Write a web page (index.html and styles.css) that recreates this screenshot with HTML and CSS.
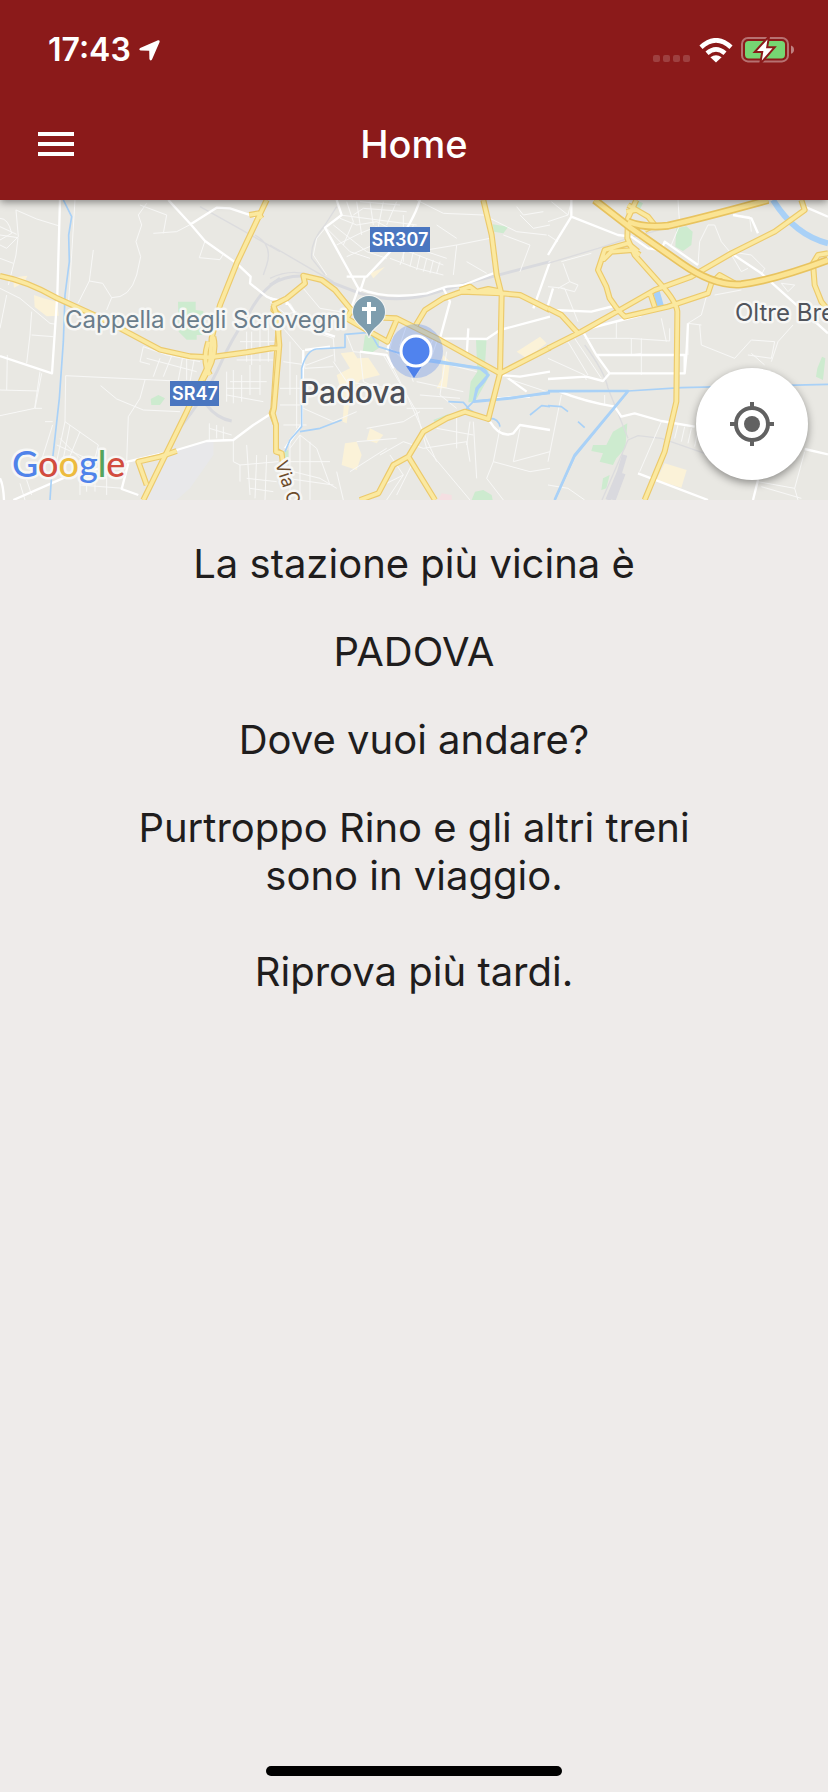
FILE: index.html
```html
<!DOCTYPE html>
<html lang="it">
<head>
<meta charset="utf-8">
<meta name="viewport" content="width=device-width">
<title>Home</title>
<link rel="stylesheet" href="styles.css">
</head>
<body>
<div class="screen">
  <header class="header">
    <div class="status">
      <div class="status-group">
        <span class="clock">17:43</span>
        <svg class="arrow" width="21" height="21" viewBox="0 0 21 21"><path d="M19 0.3Q21 0 20.6 2L13 19.6Q11.2 21.6 10.4 19L10.2 10.8L1.6 10.5Q-0.8 9.6 1.2 8Z" fill="#fff"/></svg>
      </div>
      <div class="status-group status-icons">
        <svg width="38" height="25" viewBox="0 0 38 25" fill="#fff" fill-opacity="0.17"><rect x="0" y="17" width="7" height="7" rx="2"/><rect x="10" y="17" width="7" height="7" rx="2"/><rect x="20" y="17" width="7" height="7" rx="2"/><rect x="30" y="17" width="7" height="7" rx="2"/></svg>
        <svg width="34" height="25" viewBox="0 0 34 25"><g fill="none" stroke="#fff" stroke-width="4.6"><path d="M2 9.2Q17-4.6 32 9.2"/><path d="M8 15.2Q17 7.4 26 15.2"/></g><path d="M11.4 19.2Q17 15.2 22.6 19.2L17 24.6Z" fill="#fff"/></svg>
        <svg width="54" height="26" viewBox="0 0 54 26"><rect x="1" y="1" width="46" height="23.4" rx="6" fill="none" stroke="#fff" stroke-opacity="0.38" stroke-width="2"/><path d="M50 8.6Q53 9.6 53 12.7Q53 15.8 50 16.8Z" fill="#fff" fill-opacity="0.45"/><rect x="4" y="4" width="40" height="17.4" rx="3.6" fill="#76d672"/><path d="M26.5 2.5L16 14H22.4L20.8 23.5L31.5 11.2H25Z" fill="#fff" stroke="#8b1a1a" stroke-width="4" paint-order="stroke"/></svg>
      </div>
    </div>
    <div class="toolbar">
      <button class="menu" type="button" aria-label="Menu"><svg width="36" height="24" viewBox="0 0 36 24" fill="#fff"><path d="M0 0H36V4H0ZM0 10H36V14H0ZM0 20H36V24H0Z"/></svg></button>
      <h1 class="title">Home</h1>
    </div>
  </header>

  <section class="map" aria-label="Mappa">
    <svg class="map-canvas" viewBox="0 0 828 300" preserveAspectRatio="xMidYMid slice">
      <rect width="828" height="300" fill="#e9e8e3"/>

      <!-- west -->
      <g transform="translate(0 -5) scale(0.33333)">
        <path class="urban" d="M540 765L640 735L640 780L570 880L530 915H440L500 790Z"/>
        <path class="sand" d="M102 300L130 310L172 320L176 362L140 364L104 336ZM55 245L82 242L74 262L42 278L40 258Z"/>
        <path class="park" d="M534 320H587V345L610 348V420H590V434H560L536 410ZM452 612L475 600L495 610L480 630L454 630Z"/>
        <path class="rail" d="M600 35Q700 90 840 170M765 120Q820 150 800 210L790 240"/>
        <path class="rail-wide" d="M840 250Q780 290 750 350Q690 440 660 510Q620 600 530 710M620 630Q650 670 695 678"/>
        <g class="lane">
          <path d="M48 45L110 72L175 92M48 45L55 125L20 160L0 150M0 70Q25 70 35 115L0 135M0 120L54 128L48 180L25 270M0 95L50 118M225 15L210 260L205 330M440 25L415 60L425 90L408 140L422 185L410 240Q390 310 335 308L308 265L268 258L280 165M268 258L234 325M460 115L530 110L572 88M420 30L500 60L490 115M335 308L320 345M615 138L598 188L660 194L668 180M0 190L40 205M0 280L60 310L150 385L168 388M95 350L90 420L80 505M95 420L160 425M20 300L0 400M22 480L20 585M0 585L115 588M120 530L104 640L0 662M125 535L105 640L126 640M197 542L195 680M197 542L570 560M435 555L420 610L385 665L380 800M302 572L350 612L430 645L540 650M135 680H158M195 680L295 750L285 790M195 680L170 800M210 690L190 790M240 710L205 795M170 750L260 790M180 730L240 790M120 810L158 690M430 455L500 480L600 500M430 455L420 500L450 508M520 470L490 545M550 475L535 555M480 490L460 545M560 480V555M585 480L570 560M440 490L590 530M740 410V500M755 410V510M780 400V500M805 390V500M720 440H830M700 470H830M710 495H820M680 530V620M700 525V625M725 540V620M680 580H780M680 600L790 620M690 560H800M750 510V600M780 510V600M628 685V735M650 690V730M670 695V735M628 700L695 720M700 735V800L720 810V860M740 750L750 900M770 780L765 910M800 780L795 915M720 810L835 800M740 850L830 860M750 880L820 890M60 865L75 915M80 855L95 900M240 850V900M260 840V890M285 840V890M320 840V900M240 870L370 880"/>
        </g>
        <g class="street">
          <path d="M180 15L172 300L156 535L0 483"/>
          <path d="M505 15L572 88L615 138L710 205L752 245L750 265L800 305L835 320M572 88L650 38L690 40L780 70M40 915L200 845L370 803L520 768L620 738L700 735L760 690L815 655M385 805L365 882L415 900M0 850Q10 870 12 915"/>
        </g>
        <path class="water" d="M190 15L215 65L206 120L208 200L195 300L190 440L178 610L168 700L158 790L150 915"/>
        <g class="road-edge"><path id="w1" d="M0 243Q80 258 168 308L300 368L480 464L570 484L630 487L740 472L840 456"/><path id="w2" d="M800 15L710 205L660 330L635 430L630 500L560 650L430 915"/><path id="w3" d="M748 60L775 55L785 70M842 320L824 325L820 345L838 360L820 640L815 655L828 690V765L842 775M640 425Q655 480 608 555M625 440Q605 500 630 540M530 768L480 785L415 800L440 870"/></g>
        <g class="road"><use href="#w1"/><use href="#w2"/><use href="#w3"/></g>
      </g>

      <!-- centre -->
      <g transform="translate(270 -5) scale(0.33333)">
        <path class="park" d="M668 88L715 95L700 115L672 110ZM285 420L328 430L326 460L300 476L278 470ZM618 434L650 430L645 510L660 540L615 620L595 622L602 560L622 530ZM490 675L540 655L500 690ZM605 915L615 890L640 885L665 900L668 915ZM38 770L55 765V810H38Z"/>
        <path class="sand" d="M212 475L250 470L262 490L295 488L330 540L270 555L240 610L230 685L218 680L222 620L200 540L240 520ZM520 480L540 500L530 580H500L515 550ZM740 470L810 425L830 445L770 490ZM300 700L340 720L320 745L290 735ZM225 745L260 740L275 780L260 825L215 810ZM300 235L345 215L310 250Z"/>
        <path d="M505 915L515 895L545 900V915Z" fill="#f5dfe2"/>
        <path class="rail" d="M200 35L165 90Q120 140 125 190L165 240M0 150L120 220L190 260M0 250Q60 220 120 240"/>
        <path class="rail-wide" d="M0 270Q70 225 165 255L270 295Q370 325 470 300L600 262L840 200"/>
        <g class="lane">
          <path d="M165 100L140 130L130 180L170 240M210 70L260 90L320 80L360 100M230 20L250 80L220 150M260 20L275 120M300 20L310 90M340 20L325 95M380 20L350 90M170 100L240 170L300 190M190 90L290 170L350 190M200 150L270 115L320 95M230 185L310 150M210 60L440 90M250 60L280 40L410 50M270 20L390 30M400 60V200M430 90L390 210M360 190L440 220L520 240M390 160L520 210M410 150L530 190M430 170L420 215M450 180L440 225M470 190L460 230M490 195L480 235M510 200L500 235M400 130L470 165L560 150L660 130M560 150L550 240M500 90L560 130M590 200L650 235M440 15L520 55L640 60M740 35L760 60L820 50M750 60L790 100L840 90M640 60L740 110L830 120M700 120L780 150L750 230M0 320L100 400L190 430L195 500M60 325L100 390L180 410M100 280L150 340L210 350M0 370L80 350M40 400L100 470L105 520L190 515M40 500L110 510L190 480M30 580H100M30 630H90M60 440V600M80 540V700M40 690H110M100 640L190 680L260 650M190 500L230 560L360 580M270 470L280 560L350 590M230 420L250 470L350 480M350 480L410 600L500 800M340 480L440 650L470 760L600 915M380 380L360 460L450 530M410 390L390 450L430 560M440 400L500 440L480 500M490 430L440 540M530 470L510 600L560 640M500 500L620 530M440 560L580 590M450 600L570 610M410 640L520 640M290 700L400 680L450 650M260 740L380 730M330 780L400 740L460 760M240 830L350 760M360 780L400 840L340 870M200 830L220 915M70 830L150 850L200 880M60 760L90 720L140 760L180 870M60 730V915M90 720V915M120 740V915M50 850L190 870M50 800L180 800M560 660V760M600 680L590 750M500 700L610 720M460 760L590 740L600 800M610 680L620 850M690 700L670 800L650 850L700 915M750 700L730 800L840 770M670 800L780 830L840 820M710 550L830 590M400 840L350 915M430 800L380 900"/>
        </g>
        <g class="street">
          <path d="M200 15L215 60L165 98L235 225L265 280L240 350M265 280Q350 315 470 295L530 275L580 270L670 235M450 15Q430 80 370 160L290 245H230M285 245L270 290M520 280L540 320L510 430L650 432L690 405L840 365M840 200L790 340M595 400L590 480M0 310L50 320L105 395L195 425M50 320V330M100 465L95 690L45 760M105 465L180 455M660 680Q690 730 730 715L750 690L840 705M690 540L750 545L840 530M715 550L770 590M270 470L350 480L370 520M380 380L350 470M680 610L780 605"/>
        </g>
        <path class="water" d="M45 770L60 735L95 695V520Q110 465 140 462L225 457V418L300 412L325 455L380 472L475 492L640 520Q670 540 625 580L610 620L590 640L610 650M610 618L700 610L840 595M535 620L580 622L600 645M90 710L150 700L215 675M780 660L815 632L840 635M660 670Q685 670 690 695"/>
        <path class="water canal" d="M475 498L630 520L655 540L620 580L612 620L720 610L840 592"/>
        <g class="road-edge"><path id="c1" d="M640 15L665 120L680 240L695 300L690 535L655 672L585 650L530 670L460 710L415 785L370 810L325 895L270 915M415 785L495 915"/><path id="c2" d="M10 330L50 310L105 265L100 242L155 255L195 285L240 340L265 365L380 370L510 435L690 535L840 458M380 375L352 440L290 405L230 370L245 345M438 390L465 345L520 310L575 290L695 295L750 300L840 345M570 285L600 275L620 290L655 282L695 290"/><path id="c3" d="M10 330L20 360L28 450L12 640L8 655L18 690V770L35 775L38 800M0 460H28"/></g>
        <g class="road"><use href="#c1"/><use href="#c2"/><use href="#c3"/></g>
      </g>

      <!-- east -->
      <g transform="translate(548 -5) scale(0.33333)">
        <path class="park" d="M385 100L415 94L434 110L430 150L405 168L382 155ZM265 15L285 25L275 45L262 40ZM822 485L832 490L825 555L804 545L808 520ZM238 685L232 760L205 790L195 810L155 800L165 775L130 768L135 750L175 750L195 710ZM165 850L185 840L175 880L160 885Z"/>
        <path class="sand" d="M350 805L416 825L400 878L325 855Z"/>
        <path class="rail" d="M0 205L150 160L240 130L500 60L640 30M110 450Q170 530 180 580L240 730M162 915L240 735L270 722L340 730L470 775"/>
        <path d="M180 915L215 830L230 780M195 915L225 835" fill="none" stroke="#d9d9de" stroke-width="16"/>
        <g class="lane">
          <path d="M0 80L60 60L70 20M60 60L10 20M0 120L30 140M40 200L130 175M45 205L65 260L90 270L80 290L40 280M65 260L30 280M390 15L395 90L370 150M450 210L455 140L480 90L500 90L520 140L545 170L580 230L600 220M545 170L610 180L650 220L640 240M555 60L605 65L610 110M0 275L50 280L90 380M420 385V480M455 390L460 450M475 305L460 360L420 385L460 390M460 450L560 490L610 435L680 440L670 490L600 480M610 475L650 510M735 390L690 440L670 500M700 265L740 270L720 290ZM205 380V430M110 430H245L365 438M250 430V480L280 475V430M280 475V540M365 438V400M60 440L120 540M80 430L160 550M40 600L0 800M170 600V630L60 600M390 690L380 730M410 695L400 740M430 700L420 745M450 705L440 755M340 680L275 830M0 870L60 880L110 915M770 770L740 880L630 860M740 880L750 915M640 875L760 910M500 300L580 285M340 370L355 440M0 460L60 440M0 490L110 540L115 555"/>
        </g>
        <g class="street">
          <path d="M70 15V65L30 130L0 180M70 65L210 120L250 125L300 160L340 165L350 140L450 210M550 175L640 235L840 415M770 35L840 65M555 60L610 70L630 115M210 330L130 350L15 345M105 405L280 360M105 410L145 480H410V535H185L145 480M420 385L415 480L410 535M0 552L115 545L165 558L185 535M35 590Q110 620 200 635L220 665L260 655L340 678L440 695M270 835L480 915M770 762L840 778M630 855L615 915M15 280L0 330"/>
        </g>
        <path class="water" d="M0 590L240 588L400 578L840 568M20 915L80 785L240 590M0 632L40 635L60 650M90 680L110 698"/>
        <path class="water canal" d="M0 588L240 588L80 780L20 915"/>
        <path class="river" d="M675 15Q740 120 840 145"/>
        <path d="M315 290L335 288L347 330L327 336Z" fill="#a5d0fa"/>
        <g class="road-edge"><path id="e1" d="M265 15L240 70L238 130L260 180L340 270Q385 320 388 350L385 620L350 770L290 915"/><path id="e2" d="M0 460L100 410L215 345L320 285L430 245L550 175L680 110L770 45L760 15M0 340L40 360L90 415M210 345L230 365L360 335L480 295L490 265L515 240L560 265M210 345L185 310L175 275L150 225L170 165L240 145L270 170M165 195L190 170L255 165L275 180M305 290L320 335M840 175L810 180L795 205L800 270L820 320L840 345M240 30L300 65L320 90L290 105M235 50L265 45"/></g>
        <g class="road-edge"><path id="e3" d="M140 15L250 100L400 205Q500 275 580 268Q680 255 840 195M240 80Q290 100 360 92Q460 70 660 15"/></g>
        <g class="road"><use href="#e1"/><use href="#e2"/></g>
        <g class="highway-edge"><use href="#e3"/></g>
        <g class="highway"><use href="#e3"/></g>
      </g>

      <!-- labels and markers -->
      <rect x="370" y="27" width="60" height="25" fill="#4a76c0"/>
      <text class="shield" x="400" y="46">SR307</text>
      <rect x="170" y="181" width="49" height="25" fill="#4a76c0"/>
      <text class="shield" x="195" y="200">SR47</text>
      <text class="label poi" x="65" y="128">Cappella degli Scrovegni</text>
      <text class="label city" x="300" y="203">Padova</text>
      <text class="label district" x="735" y="121">Oltre Bre</text>
      <text class="label via" transform="translate(275 263) rotate(72)">Via C</text>
      <path d="M369 137C367 127 353 124 353 112A16 16 0 0 1 385 112C385 124 371 127 369 137Z" fill="#7e9dae" stroke="#f4f4f2" stroke-width="2" paint-order="stroke"/>
      <path d="M369 102V124M362 109H376" stroke="#fff" stroke-width="4"/>
      <circle cx="416" cy="151" r="27" fill="#4f80ee" fill-opacity="0.3"/>
      <path d="M406 166H422L414 178Z" fill="#4d80ea"/>
      <circle cx="416" cy="151" r="15" fill="#5083ee" stroke="#fff" stroke-width="3"/>
      <text class="label google" x="12" y="277"><tspan fill="#4f83ea">G</tspan><tspan fill="#d24c3e">o</tspan><tspan fill="#edbb3d">o</tspan><tspan fill="#4f83ea">g</tspan><tspan fill="#55a45c">l</tspan><tspan fill="#d24c3e">e</tspan></text>
    </svg>
    <button class="locate" type="button" aria-label="La mia posizione"><svg width="44" height="44" viewBox="0 0 44 44"><circle cx="22" cy="22" r="16" fill="none" stroke="#616161" stroke-width="4"/><circle cx="22" cy="22" r="8" fill="#616161"/><path d="M22 0V6M22 38V44M0 22H6M38 22H44" stroke="#616161" stroke-width="4"/></svg></button>
  </section>

  <main class="content">
    <p>La stazione più vicina è</p>
    <p>PADOVA</p>
    <p>Dove vuoi andare?</p>
    <p>Purtroppo Rino e gli altri treni<br>sono in viaggio.<br><br>Riprova più tardi.</p>
  </main>
  <div class="home-indicator"></div>
</div>
</body>
</html>
```
FILE: styles.css
```css
* { box-sizing: border-box; }
body {
  margin: 0;
  background: #eeebea;
  color: #1f1d1d;
  font-family: Inter, "Liberation Sans", sans-serif;
}
button { border: 0; padding: 0; background: none; cursor: pointer; }
svg { display: block; }

.screen { display: flex; flex-direction: column; min-height: 100vh; }

.header {
  position: relative;
  z-index: 1;
  background: #8b1a1a;
  color: #fff;
  box-shadow: 0 2px 8px rgba(0, 0, 0, 0.45);
}
.status {
  display: flex;
  align-items: center;
  justify-content: space-between;
  height: 88px;
  padding: 12px 33px 0 48px;
}
.status-group { display: flex; align-items: center; gap: 8px; }
.status-icons { gap: 8px; }
.clock { font-size: 32px; line-height: 40px; font-weight: 600; }
.toolbar {
  display: grid;
  grid-template-columns: 1fr auto 1fr;
  align-items: center;
  height: 112px;
  padding: 0 38px;
}
.menu { justify-self: start; }
.title { margin: 0; font-size: 38px; line-height: 48px; font-weight: 500; }

.map { position: relative; height: 300px; overflow: hidden; }
.map-canvas { width: 100%; height: 100%; }
.map-canvas path { stroke-linejoin: round; }
.urban { fill: #e8e8ea; }
.sand { fill: #fbf2d8; }
.park { fill: #cdebcf; }
.rail { fill: none; stroke: #dcdcde; stroke-width: 4; }
.rail-wide { fill: none; stroke: #d9dade; stroke-width: 9; }
.lane { fill: none; stroke: #f8f8f7; stroke-width: 3; }
.street { fill: none; stroke: #fff; stroke-width: 7; }
.water { fill: none; stroke: #a9d1f7; stroke-width: 5; }
.canal { stroke-width: 8; }
.river { fill: none; stroke: #a9d1f7; stroke-width: 18; }
.road-edge { fill: none; stroke: #ecca6c; stroke-width: 18; }
.road { fill: none; stroke: #fbe9a0; stroke-width: 11; }
.highway-edge { fill: none; stroke: #e8c35f; stroke-width: 24; }
.highway { fill: none; stroke: #fbe493; stroke-width: 14; }

.label { paint-order: stroke; stroke: #f7f7f5; stroke-width: 5px; stroke-linejoin: round; }
.poi { font-size: 24px; fill: #6a7d8b; }
.city { font-size: 30px; font-weight: 500; fill: #4c4f57; }
.district { font-size: 24px; fill: #50545c; }
.via { font-size: 18px; fill: #6d4c2b; }
.google { font-family: Lato, sans-serif; font-size: 36px; font-weight: 500; }
.shield { font-size: 18px; font-weight: 600; fill: #fff; text-anchor: middle; }

.locate {
  position: absolute;
  right: 20px;
  bottom: 20px;
  display: grid;
  place-items: center;
  width: 112px;
  height: 112px;
  border-radius: 50%;
  background: #fff;
  box-shadow: 0 3px 8px rgba(0, 0, 0, 0.4);
}

.content {
  flex: 1;
  display: flex;
  flex-direction: column;
  gap: 40px;
  padding: 40px;
  text-align: center;
  font-size: 40px;
  line-height: 48px;
}
.content p { margin: 0; }

.home-indicator {
  align-self: center;
  width: 296px;
  height: 10px;
  margin-bottom: 16px;
  border-radius: 5px;
  background: #000;
}
```
